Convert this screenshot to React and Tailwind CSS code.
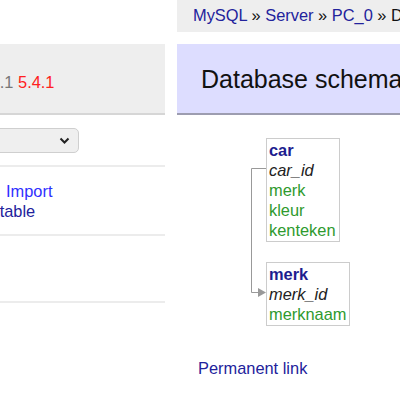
import React from 'react';

const CAR_FIELDS = [
  { name: 'car_id', pk: true },
  { name: 'merk' },
  { name: 'kleur' },
  { name: 'kenteken' },
];

const MERK_FIELDS = [{ name: 'merk_id', pk: true }, { name: 'merknaam' }];

function SchemaTable({ title, fields, className }) {
  return (
    <div className={`absolute border border-[#cccccc] bg-white px-[2px] py-[1px] pr-[3px] ${className}`}>
      <div className="font-bold text-[#1d1d8f] leading-[20px]">{title}</div>
      {fields.map((f) => (
        <div
          key={f.name}
          className={f.pk ? 'italic text-[#222] leading-[20px]' : 'text-[#2e9a2e] leading-[20px]'}
        >
          {f.name}
        </div>
      ))}
    </div>
  );
}

export default function App() {
  return (
    <div
      className="w-[400px] h-[400px] overflow-hidden bg-white flex text-[16.4px] text-[#111]"
      style={{ fontFamily: '"Liberation Sans", Arial, sans-serif' }}
    >
      {/* Left menu, scrolled partly out of view */}
      <div className="w-[270px] -ml-[105px] shrink-0 flex flex-col">
        <div className="h-[44px]" />
        <div className="h-[71px] bg-[#eeeeee] border-b-2 border-[#d6d6d6] pt-[28px] pl-[82px] leading-[20px] whitespace-nowrap">
          <span className="text-[#777]">4.8.1</span> <span className="text-[#ff2020]">5.4.1</span>
        </div>
        <div className="h-[13px]" />
        <div className="ml-[16px] w-[168px] h-[25px] rounded-[5px] border border-[#cfcfcf] bg-[#efefef] flex items-center justify-end pr-[8px]">
          <svg width="11" height="8" viewBox="0 0 11 8">
            <path d="M1.5 1.5 L5.5 5.5 L9.5 1.5" fill="none" stroke="#222" strokeWidth="2" />
          </svg>
        </div>
        <div className="h-[12px]" />
        <div className="h-[2px] bg-[#ececec]" />
        <div className="pt-[14px] pb-[13px] leading-[20px] whitespace-nowrap">
          <div className="flex justify-start pl-[6px] ml-[105px]">
            <span className="text-[#2f2fff]">Import</span>
          </div>
          <div className="-ml-[1px]">
            <span className="text-[#22229c]">Export</span> <span className="text-[#22229c]">Create table</span>
          </div>
        </div>
        <div className="h-[2px] bg-[#ececec]" />
        <div className="h-[65px]" />
        <div className="h-[2px] bg-[#ececec]" />
      </div>

      {/* Content */}
      <div className="ml-[12px] flex-1 min-w-0 flex flex-col">
        <div className="h-[32px] bg-[#eeeeee] pl-[16px] pt-[5px] leading-[20px] whitespace-nowrap">
          <span className="text-[#22229c]">MySQL</span> » <span className="text-[#22229c]">Server</span> »{' '}
          <span className="text-[#22229c]">PC_0</span> » Database schema
        </div>
        <div className="h-[12px]" />
        <div className="h-[71px] bg-[#ddddff] border-b-2 border-[#9d9db0] pl-[24px] flex items-center whitespace-nowrap">
          <h2 className="text-[25px] font-normal text-[#111] pt-[2px]">Database schema</h2>
        </div>
        <div className="relative h-[243px]">
          <svg className="absolute left-0 top-0" width="120" height="200">
            <path d="M89 53.5 H74.5 V177.5 H82" fill="none" stroke="#999" strokeWidth="1" />
            <path d="M81 173 L89 177.5 L81 182 Z" fill="#999" />
          </svg>
          <SchemaTable title="car" fields={CAR_FIELDS} className="left-[89px] top-[23px]" />
          <SchemaTable title="merk" fields={MERK_FIELDS} className="left-[89px] top-[147px]" />
        </div>
        <p className="pl-[21px] leading-[20px] text-[#22229c]">Permanent link</p>
      </div>
    </div>
  );
}
